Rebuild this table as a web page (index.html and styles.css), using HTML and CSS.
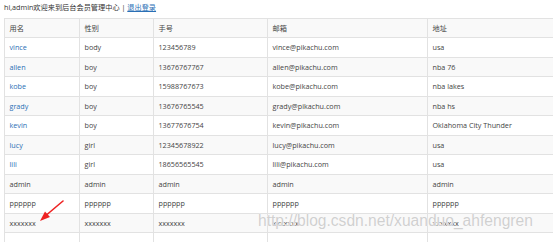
FILE: index.html
```html
<!DOCTYPE html>
<html>
<head>
<meta charset="utf-8">
<link rel="stylesheet" href="styles.css">
</head>
<body>
<div class="page">
  <div class="topbar">hi,admin欢迎来到后台会员管理中心 | <a class="logout" href="#">退出登录</a></div>
  <table class="members">
    <colgroup>
      <col class="c1"><col class="c2"><col class="c3"><col class="c4"><col class="c5">
    </colgroup>
    <tr><td>用名</td><td>性别</td><td>手号</td><td>邮箱</td><td>地址</td></tr>
    <tr><td><a class="name" href="#">vince</a></td><td>body</td><td>123456789</td><td>vince@pikachu.com</td><td>usa</td></tr>
    <tr><td><a class="name" href="#">allen</a></td><td>boy</td><td>13676767767</td><td>allen@pikachu.com</td><td>nba 76</td></tr>
    <tr><td><a class="name" href="#">kobe</a></td><td>boy</td><td>15988767673</td><td>kobe@pikachu.com</td><td>nba lakes</td></tr>
    <tr><td><a class="name" href="#">grady</a></td><td>boy</td><td>13676765545</td><td>grady@pikachu.com</td><td>nba hs</td></tr>
    <tr><td><a class="name" href="#">kevin</a></td><td>boy</td><td>13677676754</td><td>kevin@pikachu.com</td><td>Oklahoma City Thunder</td></tr>
    <tr><td><a class="name" href="#">lucy</a></td><td>girl</td><td>12345678922</td><td>lucy@pikachu.com</td><td>usa</td></tr>
    <tr><td><a class="name" href="#">lili</a></td><td>girl</td><td>18656565545</td><td>lili@pikachu.com</td><td>usa</td></tr>
    <tr><td>admin</td><td>admin</td><td>admin</td><td>admin</td><td>admin</td></tr>
    <tr><td>pppppp</td><td>pppppp</td><td>pppppp</td><td>pppppp</td><td>pppppp</td></tr>
    <tr><td>xxxxxxx</td><td>xxxxxxx</td><td>xxxxxxx</td><td>xxxxxxx</td><td>xxxxxxx</td></tr>
    <tr><td></td><td></td><td></td><td></td><td></td></tr>
  </table>
  <svg class="arrow" width="30" height="26" viewBox="0 0 30 26">
    <path d="M27 1 L11 14.5" stroke="#ee2222" stroke-width="1.6" stroke-linecap="round" fill="none"/>
    <path d="M4 21 L9 11.5 L14 17 Z" fill="#ee2222"/>
  </svg>
  <div class="watermark">http://blog.csdn.net/xuanduo_ahfengren</div>
</div>
</body>
</html>
```
FILE: styles.css
```css
html, body {
  margin: 0;
  padding: 0;
  background: #fff;
  overflow: hidden;
}
.page {
  position: relative;
  padding: 2px 0 0 4px;
  width: 560px;
  font-family: "Open Sans", "Noto Sans CJK SC", sans-serif;
  font-size: 7.2px;
  color: #444;
}
.topbar {
  line-height: 10px;
  height: 10px;
  margin-bottom: 5.5px;
  font-size: 7.2px;
  color: #333;
}
.logout {
  color: #2a6fb5;
  text-decoration: underline;
}
.members {
  border-collapse: collapse;
  width: 550px;
  table-layout: fixed;
}
.c1 { width: 75px; }
.c2 { width: 74px; }
.c3 { width: 114px; }
.c4 { width: 160px; }
.c5 { width: 127px; }
.members td {
  border: 1px solid #e2e2e2;
  height: 19.5px;
  padding: 0 4.5px;
  box-sizing: border-box;
  line-height: 10px;
  vertical-align: middle;
  white-space: nowrap;
  color: #444;
}
.members tr:nth-child(odd) td {
  background: #f9f9f9;
}
.name {
  color: #2a6fb5;
  text-decoration: none;
}
.arrow {
  position: absolute;
  left: 36px;
  top: 200px;
}
.watermark {
  position: absolute;
  left: 258px;
  top: 212px;
  font-family: "Liberation Sans", Arial, sans-serif;
  font-size: 15.6px;
  color: #d0d0d0;
  text-shadow: 0 0 1px #fff, 0 0 1px #fff;
  white-space: nowrap;
}
```
